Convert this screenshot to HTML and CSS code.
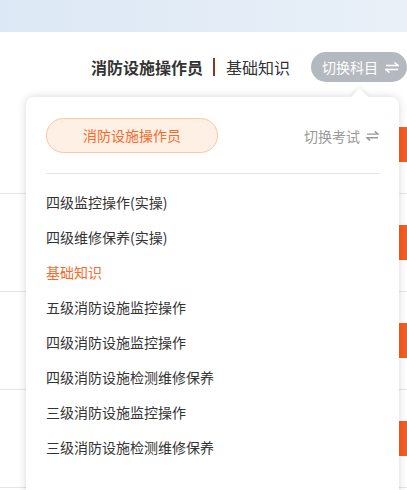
FILE: index.html
```html
<!DOCTYPE html>
<html lang="zh-CN">
<head>
	<meta charset="UTF-8">
	<title>切换科目</title>
	<link rel="stylesheet" href="styles.css">
</head>
<body>
	<div class="page">
		<div class="banner"></div>
		<header class="subject-bar">
			<h1 class="subject-title">
				<strong>消防设施操作员</strong><span class="sep"></span><span>基础知识</span>
			</h1>
			<button class="switch-btn" type="button">切换科目
				<svg class="swap" viewBox="0 0 14 12" width="14" height="12"><path d="M1 4.5H13L9.5 1.5M13 8.5H1L4.5 11.5" fill="none" stroke="currentColor" stroke-width="1.6"/></svg>
			</button>
		</header>
		<!-- 背景里的章节列表 -->
		<ul class="course-list">
			<li class="course"><a class="start"></a></li>
			<li class="course"><a class="start"></a></li>
			<li class="course"><a class="start"></a></li>
			<li class="course"><a class="start"></a></li>
		</ul>
		<!-- 科目下拉框 -->
		<div class="dropdown">
			<div class="dropdown-head">
				<span class="exam-pill">消防设施操作员</span>
				<span class="exam-switch">切换考试
					<svg class="swap" viewBox="0 0 14 12" width="13" height="11"><path d="M1 4.5H13L9.5 1.5M13 8.5H1L4.5 11.5" fill="none" stroke="currentColor" stroke-width="1.6"/></svg>
				</span>
			</div>
			<ul class="subject-list">
				<li>四级监控操作(实操)</li>
				<li>四级维修保养(实操)</li>
				<li class="active">基础知识</li>
				<li>五级消防设施监控操作</li>
				<li>四级消防设施监控操作</li>
				<li>四级消防设施检测维修保养</li>
				<li>三级消防设施监控操作</li>
				<li>三级消防设施检测维修保养</li>
			</ul>
		</div>
	</div>
</body>
</html>
```
FILE: styles.css
```css
*{
	box-sizing: border-box;
	margin: 0;
	padding: 0;
}
body{
	font-family: "Microsoft Yahei", "Noto Sans CJK SC", sans-serif;
	color: #333;
	background: #fff;
	overflow: hidden;
}
.page{
	position: relative;
	width: 407px;
	height: 490px;
	overflow: hidden;
}
.banner{
	height: 32px;
	background: linear-gradient(90deg, #dce8f5, #e9f0f8);
}
.subject-bar{
	height: 64px;
	padding-top: 6px;
	display: flex;
	justify-content: flex-end;
	align-items: center;
}
.subject-title{
	display: flex;
	align-items: center;
	font-size: 16px;
	font-weight: normal;
	line-height: 20px;
	margin-right: 21px;
}
.subject-title strong{
	font-weight: bold;
}
.sep{
	width: 2px;
	height: 18px;
	margin: 0 11px 0 10px;
	background: #8c3526;
}
.switch-btn{
	display: flex;
	align-items: center;
	height: 30px;
	padding: 0 8px 0 11px;
	border: 0;
	border-radius: 15px;
	background: #b4b9c0;
	color: #fff;
	font-family: inherit;
	font-size: 14px;
	line-height: 30px;
}
.switch-btn .swap{
	margin-left: 7px;
}
.course-list{
	list-style: none;
}
.course{
	height: 98px;
	border-bottom: 1px solid #e6e6e6;
	display: flex;
	justify-content: flex-end;
	align-items: center;
}
.start{
	display: block;
	width: 70px;
	height: 35px;
	margin-right: -62px;
	background: #fa5c1f;
}
.dropdown{
	position: absolute;
	left: 26px;
	top: 97px;
	width: 373px;
	padding: 21px 20px 40px;
	background: #fff;
	border-radius: 8px;
	box-shadow: 0 0 8px rgba(0, 0, 0, 0.16);
}
.dropdown::before{
	content: "";
	position: absolute;
	left: 327px;
	top: -6px;
	width: 13px;
	height: 13px;
	background: #fff;
	transform: rotate(45deg);
	box-shadow: -2px -2px 4px rgba(0, 0, 0, 0.06);
}
.dropdown-head{
	display: flex;
	justify-content: space-between;
	align-items: center;
	padding-bottom: 20px;
	border-bottom: 1px solid #e2e2e2;
}
.exam-pill{
	width: 172px;
	height: 35px;
	border: 1px solid #fcc89e;
	border-radius: 18px;
	background: #fff0e5;
	color: #fa6a2a;
	font-size: 14px;
	line-height: 33px;
	text-align: center;
}
.exam-switch{
	display: flex;
	align-items: center;
	color: #9a9a9a;
	font-size: 14px;
}
.exam-switch .swap{
	margin-left: 6px;
}
.subject-list{
	list-style: none;
	padding-top: 11px;
}
.subject-list li{
	height: 35px;
	font-size: 14px;
	line-height: 35px;
	color: #333;
}
.subject-list li.active{
	color: #fa6a2a;
}
```
